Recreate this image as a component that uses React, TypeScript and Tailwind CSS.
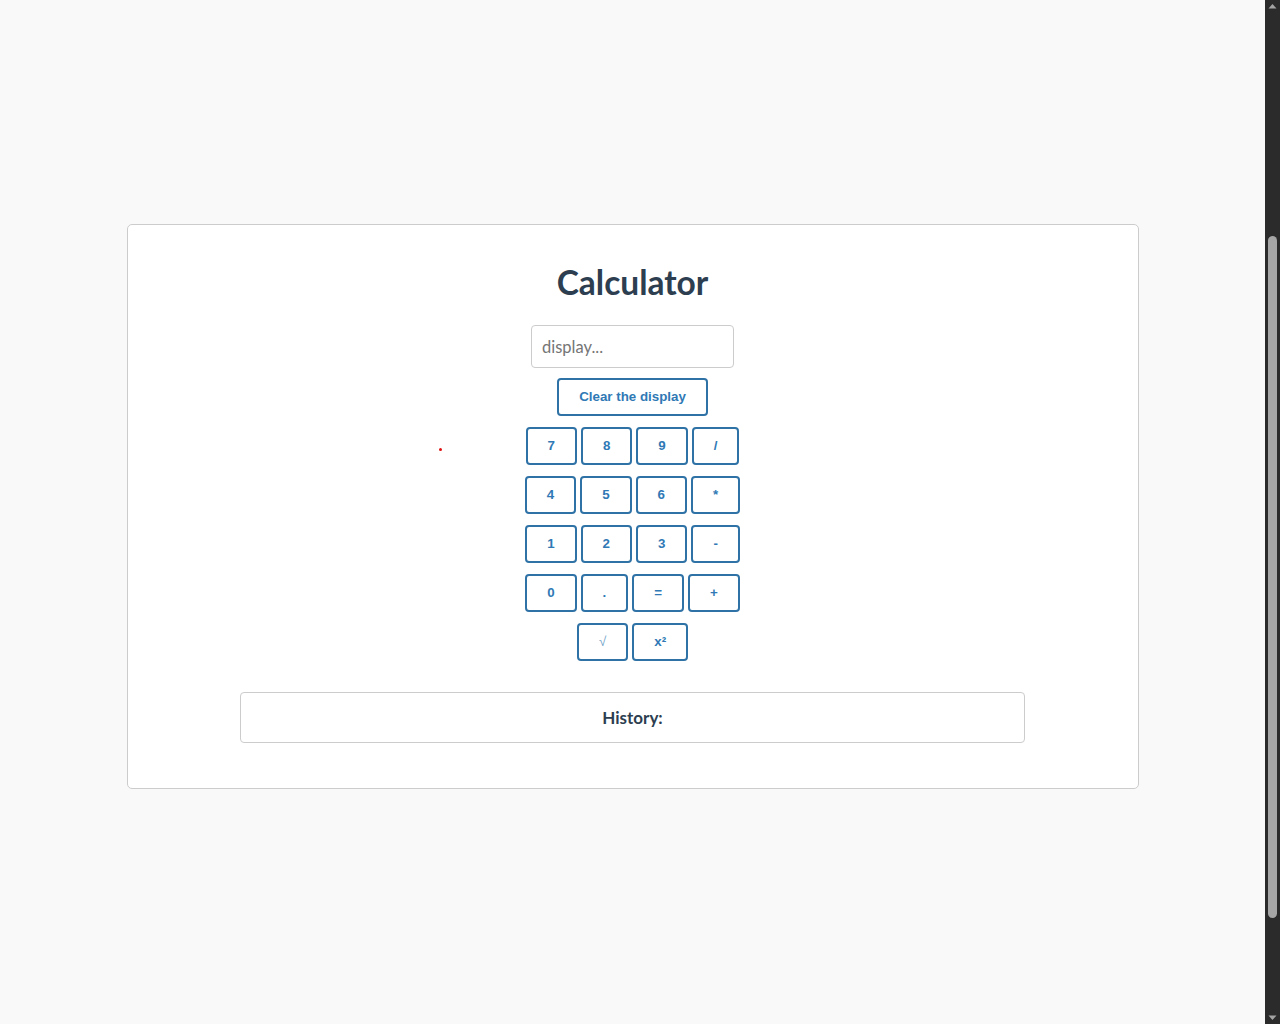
import React from "react";

const rows: string[][] = [
  ["7", "8", "9", "/"],
  ["4", "5", "6", "*"],
  ["1", "2", "3", "-"],
  ["0", ".", "=", "+"],
];

const btn =
  "h-[38px] px-[20px] bg-white border-2 border-[#2f72a6] rounded-[4px] text-[13.333px] font-bold text-[#3079b5] font-['Liberation_Sans',Arial,sans-serif] leading-none";

function Scrollbar() {
  return (
    <div className="w-[15px] shrink-0 bg-[#2b2b2b] flex flex-col items-center">
      <svg width="15" height="17" viewBox="0 0 15 17" className="shrink-0">
        <path d="M3.5 8.5 L7.5 4 L11.5 8.5 Z" fill="#a3a3a3" />
      </svg>
      <div className="mt-[219px] w-[9px] h-[682px] rounded-full bg-[#a6a6a6]" />
      <div className="flex-1" />
      <svg width="15" height="17" viewBox="0 0 15 17" className="shrink-0">
        <path d="M3.5 8.5 L7.5 13 L11.5 8.5 Z" fill="#a3a3a3" />
      </svg>
    </div>
  );
}

export default function App() {
  return (
    <div className="h-screen flex bg-[#f9f9f9] overflow-hidden">
      <div className="flex-1 pt-[224px]">
        <div className="relative mx-auto w-[80%] bg-white border border-[#cccccc] rounded-[5px] pt-[37px] pb-[45px] flex flex-col items-center">
          <span className="absolute left-[311px] top-[223px] w-[3px] h-[3px] rounded-full bg-[#e01010]" />

          <h1 className="text-[33.5px] leading-[40px] font-bold text-[#2c3e50] font-['Lato','Open_Sans',sans-serif]">
            Calculator
          </h1>

          <input
            type="text"
            placeholder="display..."
            className="mt-[23px] w-[203px] h-[43px] px-[10px] bg-white border border-[#cccccc] rounded-[4px] text-[16.5px] text-[#333] placeholder:text-[#757575] font-['Lato','Open_Sans',sans-serif] outline-none"
          />

          <button className={`mt-[10px] ${btn}`}>Clear the display</button>

          {rows.map((row, i) => (
            <div key={i} className="mt-[11px] flex justify-center gap-[4px]">
              {row.map((k) => (
                <button key={k} className={btn}>
                  {k}
                </button>
              ))}
            </div>
          ))}

          <div className="mt-[11px] flex justify-center gap-[4px]">
            <button className={`${btn} !font-normal !text-[#6f9fc8]`}>√</button>
            <button className={btn}>x²</button>
          </div>

          <div className="mt-[31px] w-[785px] h-[51px] flex items-center justify-center border border-[#cccccc] rounded-[4px]">
            <span className="text-[17px] font-bold text-[#2c3e50] font-['Lato','Open_Sans',sans-serif]">
              History:
            </span>
          </div>
        </div>
      </div>
      <Scrollbar />
    </div>
  );
}
